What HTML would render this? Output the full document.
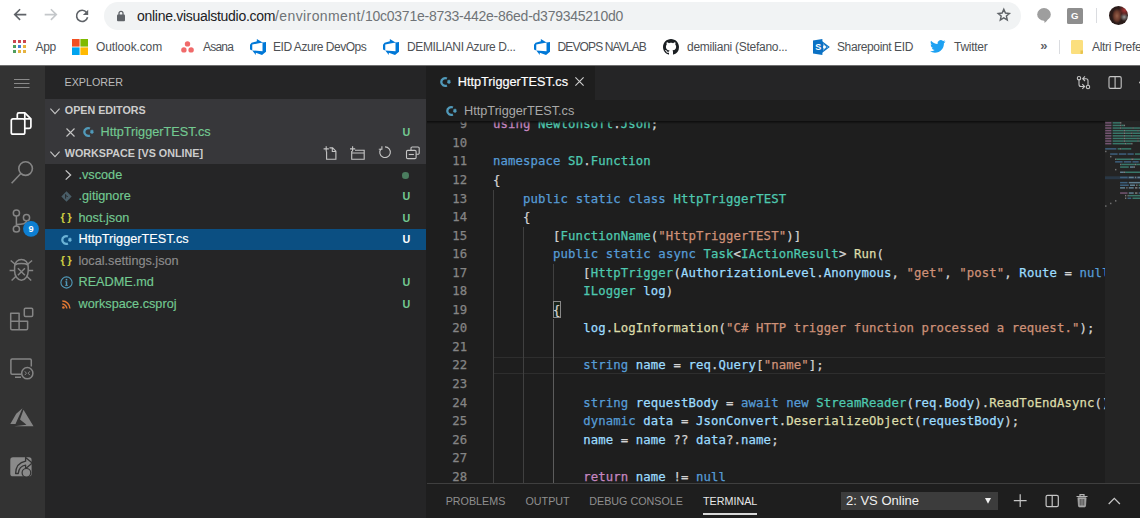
<!DOCTYPE html>
<html lang="en">
<head>
<meta charset="utf-8">
<title>HttpTriggerTEST.cs - Visual Studio Online</title>
<style>
*{box-sizing:border-box;margin:0;padding:0}
html,body{width:1140px;height:518px;overflow:hidden;background:#fff}
body{position:relative;font-family:"Liberation Sans",sans-serif;-webkit-font-smoothing:antialiased}
.abs{position:absolute}
svg{position:absolute;overflow:visible}
/* ---------- browser chrome ---------- */
#chrome{position:absolute;left:0;top:0;width:1140px;height:65px;background:#fff}
#omni{position:absolute;left:104px;top:2px;width:917px;height:28px;border-radius:14px;background:#f1f3f4}
#url{position:absolute;left:137px;top:7px;font-size:14px;line-height:18px;color:#202124;white-space:nowrap;letter-spacing:-0.29px}
#url span{color:#6f7377;letter-spacing:-0.076px}
.bm{position:absolute;top:39.3px;font-size:12px;line-height:16px;color:#4e5155;white-space:nowrap}
/* ---------- vscode ---------- */
#vs{position:absolute;left:0;top:65px;width:1140px;height:453px;background:#1e1e1e;overflow:hidden}
#topline{position:absolute;left:0;top:0;width:1140px;height:1px;background:#6f6f6f;z-index:5}
#act{position:absolute;left:0;top:0;width:45px;height:453px;background:#333333}
#side{position:absolute;left:45px;top:0;width:381.300px;height:453px;background:#252526;overflow:hidden}
.hd{position:absolute;left:19.800px;font-size:10.740px;line-height:21.480px;color:#cccccc;font-weight:bold;white-space:nowrap}
.ft{position:absolute;-webkit-text-stroke:.15px;font-size:12.700px;line-height:21.480px;color:#73c991;white-space:nowrap}
.fu{position:absolute;left:357.500px;font-size:10.740px;line-height:21.480px;color:#73c991;font-weight:bold}
#tabs{position:absolute;left:426.500px;top:0;width:713.500px;height:34.500px;background:#252526}
#tab{position:absolute;left:0;top:0;width:168.500px;height:34.500px;background:#1e1e1e}
#crumb{position:absolute;left:426.500px;top:34.500px;width:713.500px;height:21.500px;background:#1e1e1e}
#code{position:absolute;left:426.500px;top:56px;width:678px;height:362px;overflow:hidden;font-family:"DejaVu Sans Mono","Liberation Mono",monospace;font-size:12.300px;letter-spacing:.116px;color:#d4d4d4;-webkit-text-stroke:.25px}
.ln{position:absolute;left:0;width:900px;height:18.550px;line-height:18.550px;white-space:pre}
.ln i{position:absolute;left:0;width:40.800px;text-align:right;font-style:normal;color:#858585}
.ln s{position:absolute;left:66.400px;text-decoration:none}
.k{color:#569cd6}.ty{color:#4ec9b0}.st{color:#ce9178}.v{color:#9cdcfe}.f{color:#dcdcaa}.c{color:#c586c0}
#mmbg{position:absolute;left:1104.500px;top:56px;width:35.500px;height:362px;background:#242424}
#mmwrap{position:absolute;left:426.500px;top:56px;width:713.500px;height:362px;overflow:hidden}
#panel{position:absolute;left:426.500px;top:417.700px;width:713.500px;height:36px;background:#1e1e1e;border-top:1.200px solid #3f3f3f}
.pt{position:absolute;top:9.300px;font-size:10.740px;line-height:16px;color:#8f8f8f;white-space:nowrap}
</style>
</head>
<body>
<div id="chrome">
  <!-- nav icons -->
  <svg style="left:12px;top:7.400px" width="16" height="16" viewBox="0 0 16 16"><path d="M14.3 7.6H3.4M8.1 2.3 2.7 7.6l5.4 5.3" fill="none" stroke="#5f6368" stroke-width="1.6" stroke-linejoin="miter"/></svg>
  <svg style="left:43px;top:7.400px" width="16" height="16" viewBox="0 0 16 16"><path d="M1.7 7.6h10.9M7.9 2.3l5.4 5.3-5.4 5.3" fill="none" stroke="#c4c7ca" stroke-width="1.6"/></svg>
  <svg style="left:74.300px;top:7.500px" width="16" height="16" viewBox="0 0 16 16"><path d="M12.6 4.4A5.6 5.6 0 1 0 13.6 9.3" fill="none" stroke="#5f6368" stroke-width="1.6"/><path d="M14.2 1.8v5.3H8.9z" fill="#5f6368"/></svg>
  <div id="omni"></div>
  <svg style="left:116px;top:10px" width="10" height="12" viewBox="0 0 10 12"><rect x="1" y="4.6" width="8" height="6.6" rx="1" fill="#5f6368"/><path d="M3 5V3.3a2 2 0 0 1 4 0V5" fill="none" stroke="#5f6368" stroke-width="1.3"/></svg>
  <div id="url">online.visualstudio.com<span style="letter-spacing:0.39px">/environment/</span><span style="letter-spacing:-0.25px">10c0371e-8733-442e-86ed-d379345210d0</span></div>
  <svg style="left:997.3px;top:8.3px" width="13.6" height="13.6" viewBox="0 0 16 16"><path d="M8 1.6l1.95 4.3 4.65.5-3.5 3.1 1 4.6L8 11.7l-4.1 2.4 1-4.6-3.5-3.1 4.65-.5z" fill="none" stroke="#5f6368" stroke-width="1.7" stroke-linejoin="miter"/></svg>
  <svg style="left:1036.5px;top:7.8px" width="14" height="15" viewBox="0 0 14 15"><ellipse cx="7" cy="6.4" rx="6.8" ry="6.3" fill="#9e9e9e"/><path d="M6.5 12.3c1 .3 1.300 1.300.6 2.500 2-.5 3.200-2 3.600-4z" fill="#9e9e9e"/></svg>
  <div class="abs" style="left:1067px;top:8px;width:15.5px;height:15.5px;background:#8e8e8e;border-radius:1.5px;color:#fff;font-size:9.600px;line-height:15.800px;text-align:center;font-weight:bold">G</div>
  <div class="abs" style="left:1096px;top:8px;width:1px;height:15px;background:#dadce0"></div>
  <div class="abs" id="avatar" style="left:1109px;top:5.800px;width:19.4px;height:19.4px;border-radius:50%;overflow:hidden;background:radial-gradient(circle at 82% 22%,#a83434 0,rgba(168,52,52,0) 28%),radial-gradient(circle at 80% 58%,#9a9a9a 0,rgba(120,120,120,0) 22%),radial-gradient(ellipse 26% 40% at 42% 52%,#96604a 0,#6a3a2c 60%,rgba(60,30,24,0) 100%),#2a1b19"></div>
  <!-- bookmarks -->
  <svg style="left:13px;top:40px" width="13" height="13" viewBox="0 0 13 13"><g><rect x="0" y="0" width="3" height="3" fill="#cc4650"/><rect x="5" y="0" width="3" height="3" fill="#cc4650"/><rect x="10" y="0" width="3" height="3" fill="#cc4650"/><rect x="0" y="5" width="3" height="3" fill="#4f9e5e"/><rect x="5" y="5" width="3" height="3" fill="#3f80d8"/><rect x="10" y="5" width="3" height="3" fill="#e6b340"/><rect x="0" y="10" width="3" height="3" fill="#4f9e5e"/><rect x="5" y="10" width="3" height="3" fill="#e6b340"/><rect x="10" y="10" width="3" height="3" fill="#e6b340"/></g></svg>
  <div class="bm" id="b1" style="letter-spacing:-0.29px;left:35.5px">App</div>
  <svg style="left:71.600px;top:39px" width="16" height="16" viewBox="0 0 16 16"><rect x="0" y="0" width="7.6" height="7.6" fill="#f25022"/><rect x="8.4" y="0" width="7.6" height="7.6" fill="#7fba00"/><rect x="0" y="8.4" width="7.6" height="7.6" fill="#00a4ef"/><rect x="8.400" y="8.4" width="7.6" height="7.6" fill="#ffb900"/></svg>
  <div class="bm" id="b2" style="letter-spacing:-0.12px;left:96px">Outlook.com</div>
  <svg style="left:180.500px;top:40.500px" width="13" height="12" viewBox="0 0 13 12"><circle cx="6.500" cy="2.900" r="2.700" fill="#f06a6a"/><circle cx="2.900" cy="8.900" r="2.700" fill="#f06a6a"/><circle cx="10.100" cy="8.900" r="2.700" fill="#f06a6a"/></svg>
  <div class="bm" id="b3" style="letter-spacing:-0.8px;left:203px">Asana</div>
  <svg class="ado" style="left:249.500px;top:39px" width="16" height="16" viewBox="0 0 16 16"><path d="M16 3v9.700l-4 3.300-6.200-2.260v2.240L2.290 11.400l10.230.8V3.440zM12.590 3.490 6.850 0v2.290L1.580 3.840 0 5.870v4.610l2.260 1V5.570z" fill="#0078d7"/></svg>
  <div class="bm" id="b4" style="letter-spacing:-0.46px;left:273px">EID Azure DevOps</div>
  <svg class="ado" style="left:383px;top:39px" width="16" height="16" viewBox="0 0 16 16"><path d="M16 3v9.700l-4 3.300-6.200-2.260v2.240L2.290 11.400l10.230.8V3.440zM12.590 3.490 6.850 0v2.290L1.580 3.840 0 5.870v4.610l2.260 1V5.570z" fill="#0078d7"/></svg>
  <div class="bm" id="b5" style="letter-spacing:-0.38px;left:407px">DEMILIANI Azure D...</div>
  <svg class="ado" style="left:534px;top:39px" width="16" height="16" viewBox="0 0 16 16"><path d="M16 3v9.700l-4 3.300-6.200-2.260v2.240L2.290 11.400l10.230.8V3.440zM12.590 3.490 6.850 0v2.290L1.580 3.840 0 5.870v4.610l2.260 1V5.570z" fill="#0078d7"/></svg>
  <div class="bm" id="b6" style="letter-spacing:-0.87px;left:557.5px">DEVOPS NAVLAB</div>
  <svg style="left:663px;top:39px" width="16" height="16" viewBox="0 0 16 16"><path fill="#1b1f23" d="M8 0C3.580 0 0 3.580 0 8c0 3.540 2.290 6.530 5.470 7.590.4.070.55-.17.55-.38 0-.19-.01-.82-.01-1.490-2.010.37-2.530-.49-2.690-.94-.09-.23-.48-.94-.82-1.130-.28-.15-.68-.52-.01-.53.63-.01 1.080.58 1.230.82.720 1.210 1.870.87 2.330.66.070-.52.280-.87.510-1.070-1.780-.2-3.640-.89-3.640-3.950 0-.87.310-1.590.82-2.150-.08-.2-.36-1.020.08-2.120 0 0 .67-.21 2.200.82.640-.18 1.320-.27 2-.27s1.360.09 2 .27c1.530-1.040 2.200-.82 2.200-.82.440 1.100.16 1.920.08 2.120.51.560.82 1.270.82 2.150 0 3.070-1.870 3.750-3.650 3.950.29.250.54.730.54 1.480 0 1.070-.01 1.930-.01 2.200 0 .21.150.46.550.38A8.013 8.013 0 0 0 16 8c0-4.420-3.580-8-8-8z"/></svg>
  <div class="bm" id="b7" style="letter-spacing:-0.27px;left:687px">demiliani (Stefano...</div>
  <svg style="left:813px;top:39px" width="16" height="16" viewBox="0 0 16 16"><path d="M9.500 3.300 15.800 8l-6.300 4.700z" fill="none" stroke="#0a71c4" stroke-width="1.200"/><circle cx="11.200" cy="8" r="2.300" fill="none" stroke="#0a71c4" stroke-width="1"/><path d="M0 1.600 9.400 0v16L0 14.400z" fill="#0a71c4"/><text x="2.300" y="11.300" font-family="Liberation Sans,sans-serif" font-weight="bold" font-size="9" fill="#fff">S</text></svg>
  <div class="bm" id="b8" style="letter-spacing:-0.39px;left:837px">Sharepoint EID</div>
  <svg style="left:929.700px;top:40px" width="15.500" height="13" viewBox="0 0 24 20"><path fill="#1da1f2" d="M23.950 2.370a10 10 0 0 1-2.820.77 4.960 4.960 0 0 0 2.160-2.720c-.95.550-2 .96-3.130 1.190a4.920 4.920 0 0 0-8.390 4.480C7.690 5.900 4.070 3.940 1.640.970a4.820 4.820 0 0 0-.67 2.470c0 1.710.87 3.210 2.190 4.100a4.900 4.900 0 0 1-2.230-.62v.06a4.920 4.920 0 0 0 3.950 4.830 4.960 4.960 0 0 1-2.210.08 4.940 4.940 0 0 0 4.600 3.420A9.870 9.870 0 0 1 0 17.340a14 14 0 0 0 7.560 2.210c9.050 0 14-7.500 14-13.980 0-.21 0-.42-.02-.63a9.940 9.940 0 0 0 2.460-2.550z"/></svg>
  <div class="bm" id="b9" style="letter-spacing:-0.26px;left:954px">Twitter</div>
  <div class="bm" id="b10" style="left:1040.3px;top:38.2px;font-size:13px;font-weight:bold;color:#5f6368">»</div>
  <div class="abs" style="left:1059px;top:40px;width:1px;height:14px;background:#dadce0"></div>
  <svg style="left:1071px;top:40px" width="12" height="14" viewBox="0 0 12 14"><path d="M0 1.200A1.200 1.200 0 0 1 1.200 0h9.600A1.200 1.200 0 0 1 12 1.200v11.600A1.200 1.200 0 0 1 10.800 14H1.200A1.200 1.200 0 0 1 0 12.800z" fill="#fbdf7e"/><path d="M9.500 10.500h2.500v2.300a1.200 1.200 0 0 1-1.200 1.200H9.500z" fill="#e8c44f"/></svg>
  <div class="bm" id="b11" style="letter-spacing:-0.3px;left:1092px">Altri Preferiti</div>
</div>
<div id="vs">
  <div id="topline"></div>
  <div id="act"></div>
  <svg id="acticons" style="left:0;top:0" width="45" height="453" viewBox="0 65 45 453" fill="none" stroke-linecap="butt">
  <g stroke="#8a8a8a" stroke-width="1"><path d="M14 79.500h15.500M14 83.500h15.500M14 87.500h15.500"/></g>
  <!-- explorer (active) -->
  <g stroke="#ffffff" stroke-width="1.700" stroke-linejoin="round">
    <path d="M17.300 118.600v-4.200a1.600 1.600 0 0 1 1.600-1.600h6l6 6v8a1.600 1.600 0 0 1-1.600 1.600h-4.400"/>
    <path d="M24.800 113v5.800h6"/>
    <rect x="11.300" y="118.800" width="13.500" height="15.400" rx="1.800"/>
  </g>
  <!-- search -->
  <g stroke="#858585" stroke-width="1.600"><circle cx="25.600" cy="168.600" r="6.800"/><path d="M20.600 173.800l-9 9.400"/></g>
  <!-- scm -->
  <g stroke="#858585" stroke-width="1.500"><circle cx="16.400" cy="213" r="3.100"/><circle cx="26.500" cy="217.700" r="3.100"/><circle cx="16.400" cy="229" r="3.100"/><path d="M16.400 216.100v9.800M26.500 220.800c0 3.400-4.500 3.600-10.100 3.600"/></g>
  <circle cx="31" cy="228.800" r="7.900" fill="#0e7fd2"/>
  <text x="31" y="232.200" text-anchor="middle" font-family="Liberation Sans,sans-serif" font-weight="bold" font-size="9.200" fill="#ffffff" stroke="none">9</text>
  <!-- debug -->
  <g stroke="#858585" stroke-width="1.500"><path d="M14.600 267c0-4.400 3-7.600 6.800-7.600s6.800 3.200 6.800 7.600v4c0 5-3.100 9.300-6.800 9.300s-6.800-4.300-6.800-9.300z"/><path d="M15.200 264.800c2-1.600 10.400-1.600 12.400 0"/><path d="M15.200 264.300l-4.500-3.800M27.600 264.300l4.500-3.800M14.600 270.500h-5M28.200 270.500h5M16 276.200l-4.400 4.300M26.800 276.200l4.400 4.300M17.900 268.200l7 7M24.900 268.200l-7 7"/></g>
  <!-- extensions -->
  <g stroke="#858585" stroke-width="1.500" stroke-linejoin="round"><path d="M10.700 313.200h8.400v16.500h-7.200a1.200 1.200 0 0 1-1.200-1.200zM19.100 321.300h8.500v7.200a1.200 1.200 0 0 1-1.200 1.200h-7.300M10.700 321.300h8.400"/><rect x="24.300" y="308.200" width="8.400" height="8.300" rx="1.200"/></g>
  <!-- remote explorer -->
  <g stroke="#858585" stroke-width="1.500"><path d="M21.500 374.200h-9.400a1.200 1.200 0 0 1-1.200-1.200v-12.800a1.200 1.200 0 0 1 1.200-1.200h18a1.200 1.200 0 0 1 1.200 1.200v6.300M15 377.300h6"/><circle cx="27.300" cy="373.200" r="5.600"/><path d="M24.800 371.300l1.600 1.900-1.600 1.900M29.800 371.300l-1.600 1.900 1.600 1.900" stroke-width="1"/></g>
  <!-- azure -->
  <g fill="#858585" stroke="none"><path d="M22.500 408.300l-6.300 5.400-5.900 10.300h5.200zM23.500 409.800l-3.500 9.600 6.500 5.300-12.200 1.500h19.200z"/></g>
  <!-- live share -->
  <g><rect x="10.300" y="457.300" width="21.300" height="19" rx="2.600" fill="#8a8a8a"/><path d="M15.600 473.500c.2-6.500 3.400-11 10-12.300v-3.700l6.600 5.600-6.600 5.600v-3.500c-4 .5-6.800 3.300-7.300 8.300z" fill="#8a8a8a" stroke="#333333" stroke-width="1.300" stroke-linejoin="round"/><circle cx="26.400" cy="472.800" r="4.300" fill="#8a8a8a" stroke="#333333" stroke-width="1.200"/></g>
</svg>
  <div id="side">
  <div class="abs" id="extitle" style="left:19.500px;top:9.300px;font-size:10.740px;line-height:16px;color:#bbbbbb;white-space:nowrap">EXPLORER</div>
  <div class="abs" style="left:0;top:34.20px;width:381.500px;height:64.98px;background:#37373a"></div>
  <svg style="left:4.7px;top:43.00px" width="10" height="7" viewBox="0 0 10 7"><path d="M.4.700l4.600 4.900L9.600.700" fill="none" stroke="#c5c5c5" stroke-width="1.100"/></svg>
  <div class="hd" id="h1" style="top:35.40px">OPEN EDITORS</div>
  <svg style="left:4.7px;top:85.92px" width="10" height="7" viewBox="0 0 10 7"><path d="M.4.700l4.600 4.900L9.600.700" fill="none" stroke="#c5c5c5" stroke-width="1.100"/></svg>
  <div class="hd" id="h2" style="top:78.32px">WORKSPACE [VS ONLINE]</div>
  <svg style="left:21.200px;top:63.36px" width="9" height="9" viewBox="0 0 9 9"><path d="M.500.500l8 8M8.500.500l-8 8" stroke="#c5c5c5" stroke-width="1.100"/></svg>
  <svg style="left:37.6px;top:62.46px" width="11" height="10" viewBox="0 0 11 10"><path d="M6.900 1.500A3.900 3.900 0 1 0 6.900 8.500" fill="none" stroke="#519aba" stroke-width="2.300"/><path d="M7.600 3.400h2.600v2.800H7.600z" fill="#519aba"/><path d="M8.400 2.700v4.200M9.500 2.700v4.200M7 4.100h3.800M7 5.500h3.800" stroke="#519aba" stroke-width=".6"/></svg>
  <div class="ft" id="f0" style="left:55.500px;top:56.86px">HttpTriggerTEST.cs</div>
  <div class="fu" style="top:56.86px">U</div>
  <svg style="left:278px;top:80.72px" width="142" height="15" viewBox="0 0 142 15" fill="none" stroke="#c5c5c5" stroke-width="1.100">
 <path d="M3.600 5.500v7.800h9.300V5.200L9.600 1.900H6.500M9.300 2.100v3.400h3.500M.600 2.900h5.200M3.200.300v5.200"/>
 <path d="M28.700 5v8.200h12.500V4.200h-9.200M28.700 7h12.500M27 2.900h5.200M29.600.300v5.200"/>
 <path d="M58 2.800A5.300 5.300 0 1 0 62 .900"/><path d="M55.800 3.300h3.100v-3.100" stroke-width="1.100"/>
 <path d="M88 4.300v-2.100a1.200 1.200 0 0 1 1.200-1.200h5.800a1.200 1.200 0 0 1 1.200 1.200v4.800a1.200 1.200 0 0 1-1.200 1.200h-1.800"/><rect x="83.500" y="4.400" width="9.600" height="8.200" rx="1.200"/><path d="M85.700 8.500h5.200"/>
</svg>
  <svg style="left:19.8px;top:105.31px" width="7" height="10" viewBox="0 0 7 10"><path d="M.700.400l4.900 4.600L.700 9.600" fill="none" stroke="#c5c5c5" stroke-width="1.300"/></svg>
  <div class="abs" style="left:357.400px;top:107.01px;width:6.600px;height:6.600px;border-radius:50%;background:#4b7d5f"></div>
  <div class="ft" id="f1" style="left:33.500px;top:99.78px;color:#73c991">.vscode</div>
  <svg style="left:16px;top:126.47px" width="11" height="11" viewBox="0 0 11 11"><path d="M5.500.300l5.200 5.200-5.200 5.200L.300 5.500z" fill="#4a5e68"/><path d="M4.600 3.200v4.400M4.600 4.600l2.200 1" stroke="#252526" stroke-width=".9"/></svg>
  <div class="ft" id="f2" style="left:33.500px;top:121.24px;color:#73c991">.gitignore</div>
  <div class="fu" style="top:121.24px">U</div>
  <div class="abs" style="left:15.600px;top:142.10px;font-size:11.500px;font-weight:bold;line-height:21.46px;color:#cbcb41;letter-spacing:2.200px">{}</div>
  <div class="ft" id="f3" style="left:33.500px;top:142.70px;color:#73c991">host.json</div>
  <div class="fu" style="top:142.70px">U</div>
  <div class="abs" style="left:0;top:163.96px;width:381.500px;height:20.86px;background:#0b4f82"></div>
  <svg style="left:16.3px;top:169.69px" width="11" height="10" viewBox="0 0 11 10"><path d="M6.900 1.500A3.900 3.900 0 1 0 6.900 8.500" fill="none" stroke="#6bb3d6" stroke-width="2.300"/><path d="M7.600 3.400h2.600v2.800H7.600z" fill="#6bb3d6"/><path d="M8.400 2.700v4.200M9.500 2.700v4.200M7 4.100h3.800M7 5.500h3.800" stroke="#6bb3d6" stroke-width=".6"/></svg>
  <div class="ft" id="f4" style="left:33.500px;top:164.16px;color:#ffffff">HttpTriggerTEST.cs</div>
  <div class="fu" style="top:164.16px;color:#ffffff">U</div>
  <div class="abs" style="left:15.600px;top:185.02px;font-size:11.500px;font-weight:bold;line-height:21.46px;color:#cbcb41;letter-spacing:2.200px">{}</div>
  <div class="ft" id="f5" style="left:33.500px;top:185.62px;color:#8c8c8c">local.settings.json</div>
  <svg style="left:14.500px;top:210.61px" width="13" height="13" viewBox="0 0 13 13"><circle cx="6.500" cy="6.500" r="5.600" fill="none" stroke="#519aba" stroke-width="1.100"/><path d="M6.500 5.400v4.200" stroke="#519aba" stroke-width="1.500"/><circle cx="6.500" cy="3.700" r=".9" fill="#519aba"/><path d="M5.300 5.700h1.500M5.200 9.500h2.700" stroke="#519aba" stroke-width=".8"/></svg>
  <div class="ft" id="f6" style="left:33.500px;top:207.08px;color:#73c991">README.md</div>
  <div class="fu" style="top:207.08px">U</div>
  <svg style="left:16.800px;top:234.87px" width="9" height="9" viewBox="0 0 9 9"><circle cx="1.400" cy="7.500" r="1.300" fill="#e37933"/><path d="M.300 4.100a4.500 4.500 0 0 1 4.500 4.500M.300 1a7.600 7.600 0 0 1 7.600 7.600" fill="none" stroke="#e37933" stroke-width="1.500"/></svg>
  <div class="ft" id="f7" style="left:33.500px;top:228.54px;color:#73c991">workspace.csproj</div>
  <div class="fu" style="top:228.54px">U</div>
  </div>
  <div id="tabs"><div id="tab"><svg style="left:13.5px;top:12.3px" width="11" height="10" viewBox="0 0 11 10"><path d="M6.900 1.500A3.900 3.900 0 1 0 6.900 8.500" fill="none" stroke="#519aba" stroke-width="2.300"/><path d="M7.600 3.400h2.600v2.800H7.600z" fill="#519aba"/><path d="M8.400 2.700v4.200M9.500 2.700v4.200M7 4.100h3.800M7 5.500h3.800" stroke="#519aba" stroke-width=".6"/></svg>
    <div class="abs" id="tabt" style="left:31.300px;top:1.300px;-webkit-text-stroke:.2px;font-size:12.700px;line-height:33.800px;color:#ffffff;white-space:nowrap">HttpTriggerTEST.cs</div>
    <svg style="left:148.800px;top:12px" width="9" height="9" viewBox="0 0 9 9"><path d="M.400.400l8.200 8.200M8.600.400L.400 8.600" stroke="#d0d0d0" stroke-width="1.100"/></svg></div><svg style="left:649.200px;top:10px" width="64.8" height="15" viewBox="1076 75 64.8 15" fill="none" stroke="#c5c5c5" stroke-width="1.100">
    <circle cx="1079" cy="78.200" r="1.700"/><circle cx="1088" cy="87" r="1.700"/>
    <path d="M1079 80v4.500a2 2 0 0 0 2 2h2.800M1082.300 84.200l2.300 2.300-2.300 2.300M1088 85.200v-4.500a2 2 0 0 0-2-2h-2.600M1085 76.400l-2.300 2.300 2.300 2.300"/>
    <rect x="1109" y="76.600" width="12.200" height="11.800" rx="1.400"/><path d="M1115.100 76.600v11.800"/>
    <circle cx="1140" cy="82.500" r="1" fill="#c5c5c5" stroke="none"/>
  </svg></div>
  <div id="crumb"><svg style="left:19.3px;top:6px" width="11" height="10" viewBox="0 0 11 10"><path d="M6.900 1.500A3.900 3.900 0 1 0 6.900 8.500" fill="none" stroke="#519aba" stroke-width="2.300"/><path d="M7.600 3.400h2.600v2.800H7.600z" fill="#519aba"/><path d="M8.400 2.700v4.200M9.500 2.700v4.200M7 4.100h3.800M7 5.500h3.800" stroke="#519aba" stroke-width=".6"/></svg>
    <div class="abs" id="crt" style="left:37.600px;top:1px;font-size:12.700px;line-height:21px;color:#a9a9a9;white-space:nowrap">HttpTriggerTEST.cs</div></div>
  <div id="code">
    <div class="abs" style="left:67px;top:235.75px;width:613px;height:16.95px;border-top:1.300px solid #2e2e2e;border-bottom:1.300px solid #2e2e2e"></div>
    <div class="abs" style="left:66.40px;top:68.50px;width:1px;height:315.35px;background:#404040"></div>
    <div class="abs" style="left:96.48px;top:105.60px;width:1px;height:278.25px;background:#404040"></div>
    <div class="abs" style="left:126.57px;top:142.70px;width:1px;height:37.10px;background:#404040"></div>
    <div class="abs" style="left:126.57px;top:198.35px;width:1px;height:185.50px;background:#5c5c5c"></div>
    <div class="abs" style="left:126.07px;top:180.20px;width:8.52px;height:16.95px;border:1px solid #888888;background:rgba(0,100,0,.1)"></div>
    <div class="ln" style="top:-5.70px"><i>9</i><s><span class="c">using</span> <span class="ty">Newtonsoft</span>.<span class="ty">Json</span>;</s></div>
    <div class="ln" style="top:12.85px"><i>10</i><s></s></div>
    <div class="ln" style="top:31.40px"><i>11</i><s><span class="k">namespace</span> <span class="ty">SD</span>.<span class="ty">Function</span></s></div>
    <div class="ln" style="top:49.95px"><i>12</i><s>{</s></div>
    <div class="ln" style="top:68.50px"><i>13</i><s>    <span class="k">public</span> <span class="k">static</span> <span class="k">class</span> <span class="ty">HttpTriggerTEST</span></s></div>
    <div class="ln" style="top:87.05px"><i>14</i><s>    {</s></div>
    <div class="ln" style="top:105.60px"><i>15</i><s>        [<span class="ty">FunctionName</span>(<span class="st">"HttpTriggerTEST"</span>)]</s></div>
    <div class="ln" style="top:124.15px"><i>16</i><s>        <span class="k">public</span> <span class="k">static</span> <span class="k">async</span> <span class="ty">Task</span>&lt;<span class="ty">IActionResult</span>&gt; <span class="f">Run</span>(</s></div>
    <div class="ln" style="top:142.70px"><i>17</i><s>            [<span class="ty">HttpTrigger</span>(<span class="v">AuthorizationLevel</span>.<span class="v">Anonymous</span>, <span class="st">"get"</span>, <span class="st">"post"</span>, <span class="v">Route</span> = <span class="k">null</span>)] <span class="ty">HttpRequest</span> <span class="v">req</span>,</s></div>
    <div class="ln" style="top:161.25px"><i>18</i><s>            <span class="ty">ILogger</span> <span class="v">log</span>)</s></div>
    <div class="ln" style="top:179.80px"><i>19</i><s>        {</s></div>
    <div class="ln" style="top:198.35px"><i>20</i><s>            <span class="v">log</span>.<span class="f">LogInformation</span>(<span class="st">"C# HTTP trigger function processed a request."</span>);</s></div>
    <div class="ln" style="top:216.90px"><i>21</i><s></s></div>
    <div class="ln" style="top:235.45px"><i>22</i><s>            <span class="k">string</span> <span class="v">name</span> = <span class="v">req</span>.<span class="v">Query</span>[<span class="st">"name"</span>];</s></div>
    <div class="ln" style="top:254.00px"><i>23</i><s></s></div>
    <div class="ln" style="top:272.55px"><i>24</i><s>            <span class="k">string</span> <span class="v">requestBody</span> = <span class="k">await</span> <span class="k">new</span> <span class="ty">StreamReader</span>(<span class="v">req</span>.<span class="v">Body</span>).<span class="f">ReadToEndAsync</span>();</s></div>
    <div class="ln" style="top:291.10px"><i>25</i><s>            <span class="k">dynamic</span> <span class="v">data</span> = <span class="v">JsonConvert</span>.<span class="f">DeserializeObject</span>(<span class="v">requestBody</span>);</s></div>
    <div class="ln" style="top:309.65px"><i>26</i><s>            <span class="v">name</span> = <span class="v">name</span> ?? <span class="v">data</span>?.<span class="v">name</span>;</s></div>
    <div class="ln" style="top:328.20px"><i>27</i><s></s></div>
    <div class="ln" style="top:346.75px"><i>28</i><s>            <span class="c">return</span> <span class="v">name</span> != <span class="k">null</span></s></div>
    <div class="ln" style="top:365.30px"><i>29</i><s>                ? (<span class="ty">ActionResult</span>)<span class="k">new</span> <span class="ty">OkObjectResult</span>(<span class="st">$"Hello, {name}"</span>)</s></div>
    <div class="abs" style="left:0;top:0;width:713.500px;height:3px;background:linear-gradient(#0c0c0c,rgba(12,12,12,0))"></div>
  </div>
  <div id="mmbg"></div>
  <div id="mmwrap"><svg id="mini" style="left:678.500px;top:0" width="35" height="362" viewBox="1105 0 35 362" opacity=".5"><g><rect x="1105.20" y="1.10" width="6.20" height="1.500" fill="#c586c0"/><rect x="1112.64" y="1.10" width="7.44" height="1.500" fill="#4ec9b0"/><rect x="1120.08" y="1.10" width="1.24" height="1.500" fill="#d4d4d4"/><rect x="1105.20" y="3.70" width="6.20" height="1.500" fill="#c586c0"/><rect x="1112.64" y="3.70" width="7.44" height="1.500" fill="#4ec9b0"/><rect x="1120.08" y="3.70" width="1.24" height="1.500" fill="#d4d4d4"/><rect x="1121.32" y="3.70" width="2.48" height="1.500" fill="#4ec9b0"/><rect x="1123.80" y="3.70" width="1.24" height="1.500" fill="#d4d4d4"/><rect x="1105.20" y="6.30" width="6.20" height="1.500" fill="#c586c0"/><rect x="1112.64" y="6.30" width="7.44" height="1.500" fill="#4ec9b0"/><rect x="1120.08" y="6.30" width="1.24" height="1.500" fill="#d4d4d4"/><rect x="1121.32" y="6.30" width="11.16" height="1.500" fill="#4ec9b0"/><rect x="1132.48" y="6.30" width="1.24" height="1.500" fill="#d4d4d4"/><rect x="1133.72" y="6.30" width="6.20" height="1.500" fill="#4ec9b0"/><rect x="1139.92" y="6.30" width="1.24" height="1.500" fill="#d4d4d4"/><rect x="1105.20" y="8.90" width="6.20" height="1.500" fill="#c586c0"/><rect x="1112.64" y="8.90" width="11.16" height="1.500" fill="#4ec9b0"/><rect x="1123.80" y="8.90" width="1.24" height="1.500" fill="#d4d4d4"/><rect x="1125.04" y="8.90" width="12.40" height="1.500" fill="#4ec9b0"/><rect x="1137.44" y="8.90" width="1.24" height="1.500" fill="#d4d4d4"/><rect x="1138.68" y="8.90" width="3.72" height="1.500" fill="#4ec9b0"/><rect x="1105.20" y="11.50" width="6.20" height="1.500" fill="#c586c0"/><rect x="1112.64" y="11.50" width="11.16" height="1.500" fill="#4ec9b0"/><rect x="1123.80" y="11.50" width="1.24" height="1.500" fill="#d4d4d4"/><rect x="1125.04" y="11.50" width="6.20" height="1.500" fill="#4ec9b0"/><rect x="1131.24" y="11.50" width="1.24" height="1.500" fill="#d4d4d4"/><rect x="1132.48" y="11.50" width="8.68" height="1.500" fill="#4ec9b0"/><rect x="1105.20" y="14.10" width="6.20" height="1.500" fill="#c586c0"/><rect x="1112.64" y="14.10" width="11.16" height="1.500" fill="#4ec9b0"/><rect x="1123.80" y="14.10" width="1.24" height="1.500" fill="#d4d4d4"/><rect x="1125.04" y="14.10" width="6.20" height="1.500" fill="#4ec9b0"/><rect x="1131.24" y="14.10" width="1.24" height="1.500" fill="#d4d4d4"/><rect x="1132.48" y="14.10" width="8.68" height="1.500" fill="#4ec9b0"/><rect x="1105.20" y="16.70" width="6.20" height="1.500" fill="#c586c0"/><rect x="1112.64" y="16.70" width="11.16" height="1.500" fill="#4ec9b0"/><rect x="1123.80" y="16.70" width="1.24" height="1.500" fill="#d4d4d4"/><rect x="1125.04" y="16.70" width="12.40" height="1.500" fill="#4ec9b0"/><rect x="1137.44" y="16.70" width="1.24" height="1.500" fill="#d4d4d4"/><rect x="1138.68" y="16.70" width="4.96" height="1.500" fill="#4ec9b0"/><rect x="1105.20" y="19.30" width="6.20" height="1.500" fill="#c586c0"/><rect x="1112.64" y="19.30" width="11.16" height="1.500" fill="#4ec9b0"/><rect x="1123.80" y="19.30" width="1.24" height="1.500" fill="#d4d4d4"/><rect x="1125.04" y="19.30" width="12.40" height="1.500" fill="#4ec9b0"/><rect x="1137.44" y="19.30" width="1.24" height="1.500" fill="#d4d4d4"/><rect x="1138.68" y="19.30" width="8.68" height="1.500" fill="#4ec9b0"/><rect x="1105.20" y="21.90" width="6.20" height="1.500" fill="#c586c0"/><rect x="1112.64" y="21.90" width="12.40" height="1.500" fill="#4ec9b0"/><rect x="1125.04" y="21.90" width="1.24" height="1.500" fill="#d4d4d4"/><rect x="1126.28" y="21.90" width="4.96" height="1.500" fill="#4ec9b0"/><rect x="1131.24" y="21.90" width="1.24" height="1.500" fill="#d4d4d4"/><rect x="1105.20" y="27.10" width="11.16" height="1.500" fill="#569cd6"/><rect x="1117.60" y="27.10" width="2.48" height="1.500" fill="#4ec9b0"/><rect x="1120.08" y="27.10" width="1.24" height="1.500" fill="#d4d4d4"/><rect x="1121.32" y="27.10" width="9.92" height="1.500" fill="#4ec9b0"/><rect x="1105.20" y="29.70" width="1.24" height="1.500" fill="#d4d4d4"/><rect x="1110.16" y="32.30" width="7.44" height="1.500" fill="#569cd6"/><rect x="1118.84" y="32.30" width="7.44" height="1.500" fill="#569cd6"/><rect x="1127.52" y="32.30" width="6.20" height="1.500" fill="#569cd6"/><rect x="1134.96" y="32.30" width="18.60" height="1.500" fill="#4ec9b0"/><rect x="1110.16" y="34.90" width="1.24" height="1.500" fill="#d4d4d4"/><rect x="1115.12" y="37.50" width="1.24" height="1.500" fill="#d4d4d4"/><rect x="1116.36" y="37.50" width="14.88" height="1.500" fill="#4ec9b0"/><rect x="1131.24" y="37.50" width="2.48" height="1.500" fill="#d4d4d4"/><rect x="1133.72" y="37.50" width="18.60" height="1.500" fill="#4ec9b0"/><rect x="1115.12" y="40.10" width="7.44" height="1.500" fill="#569cd6"/><rect x="1123.80" y="40.10" width="7.44" height="1.500" fill="#569cd6"/><rect x="1132.48" y="40.10" width="6.20" height="1.500" fill="#569cd6"/><rect x="1139.92" y="40.10" width="4.96" height="1.500" fill="#4ec9b0"/><rect x="1120.08" y="42.70" width="1.24" height="1.500" fill="#d4d4d4"/><rect x="1121.32" y="42.70" width="13.64" height="1.500" fill="#4ec9b0"/><rect x="1134.96" y="42.70" width="1.24" height="1.500" fill="#d4d4d4"/><rect x="1136.20" y="42.70" width="22.32" height="1.500" fill="#4ec9b0"/><rect x="1120.08" y="45.30" width="8.68" height="1.500" fill="#4ec9b0"/><rect x="1130.00" y="45.30" width="3.72" height="1.500" fill="#9cdcfe"/><rect x="1133.72" y="45.30" width="1.24" height="1.500" fill="#d4d4d4"/><rect x="1115.12" y="47.90" width="1.24" height="1.500" fill="#d4d4d4"/><rect x="1120.08" y="50.50" width="3.72" height="1.500" fill="#9cdcfe"/><rect x="1123.80" y="50.50" width="1.24" height="1.500" fill="#d4d4d4"/><rect x="1125.04" y="50.50" width="17.36" height="1.500" fill="#4ec9b0"/><rect x="1105" y="55.30" width="35" height="2.90" fill="#2f4a66"/><rect x="1120.08" y="55.70" width="7.44" height="1.500" fill="#569cd6"/><rect x="1128.76" y="55.70" width="4.96" height="1.500" fill="#9cdcfe"/><rect x="1134.96" y="55.70" width="1.24" height="1.500" fill="#d4d4d4"/><rect x="1137.44" y="55.70" width="3.72" height="1.500" fill="#9cdcfe"/><rect x="1120.08" y="60.90" width="7.44" height="1.500" fill="#569cd6"/><rect x="1128.76" y="60.90" width="13.64" height="1.500" fill="#9cdcfe"/><rect x="1120.08" y="63.50" width="8.68" height="1.500" fill="#569cd6"/><rect x="1130.00" y="63.50" width="4.96" height="1.500" fill="#9cdcfe"/><rect x="1136.20" y="63.50" width="1.24" height="1.500" fill="#d4d4d4"/><rect x="1138.68" y="63.50" width="13.64" height="1.500" fill="#4ec9b0"/><rect x="1120.08" y="66.10" width="4.96" height="1.500" fill="#9cdcfe"/><rect x="1126.28" y="66.10" width="1.24" height="1.500" fill="#d4d4d4"/><rect x="1128.76" y="66.10" width="4.96" height="1.500" fill="#9cdcfe"/><rect x="1134.96" y="66.10" width="2.48" height="1.500" fill="#d4d4d4"/><rect x="1138.68" y="66.10" width="4.96" height="1.500" fill="#9cdcfe"/><rect x="1120.08" y="71.30" width="7.44" height="1.500" fill="#c586c0"/><rect x="1128.76" y="71.30" width="4.96" height="1.500" fill="#9cdcfe"/><rect x="1134.96" y="71.30" width="2.48" height="1.500" fill="#d4d4d4"/><rect x="1138.68" y="71.30" width="4.96" height="1.500" fill="#569cd6"/><rect x="1125.04" y="73.90" width="1.24" height="1.500" fill="#d4d4d4"/><rect x="1127.52" y="73.90" width="1.24" height="1.500" fill="#d4d4d4"/><rect x="1128.76" y="73.90" width="14.88" height="1.500" fill="#4ec9b0"/><rect x="1125.04" y="76.50" width="1.24" height="1.500" fill="#d4d4d4"/><rect x="1127.52" y="76.50" width="3.72" height="1.500" fill="#569cd6"/><rect x="1132.48" y="76.50" width="27.28" height="1.500" fill="#4ec9b0"/><rect x="1115.12" y="79.10" width="1.24" height="1.500" fill="#d4d4d4"/><rect x="1110.16" y="81.70" width="1.24" height="1.500" fill="#d4d4d4"/><rect x="1105.20" y="84.30" width="1.24" height="1.500" fill="#d4d4d4"/></g></svg></div>
  <div id="panel">
    <div class="pt" id="p1" style="left:19.200px">PROBLEMS</div>
    <div class="pt" id="p2" style="left:99px">OUTPUT</div>
    <div class="pt" id="p3" style="left:162.800px">DEBUG CONSOLE</div>
    <div class="pt" id="p4" style="left:276.500px;color:#e7e7e7">TERMINAL</div>
    <div class="abs" style="left:276.500px;top:29.800px;width:53.500px;height:1.200px;background:#d8d8d8"></div>
    <div class="abs" id="sel" style="left:414.500px;top:8.600px;width:156.500px;height:17.600px;background:#3c3c3c"></div>
    <div class="abs" id="selt" style="left:419.500px;top:8.600px;font-size:13px;line-height:17.600px;color:#f0f0f0;white-space:nowrap">2: VS Online</div>
    <svg style="left:558.300px;top:14.300px" width="6" height="6" viewBox="0 0 6 6"><path d="M0 0h6L3 5.800z" fill="#f0f0f0"/></svg>
    <svg style="left:586.200px;top:9px" width="110" height="15" viewBox="1013.500 492 110 15" fill="none" stroke="#c5c5c5" stroke-width="1.200">
      <path d="M1020.700 493.200v12.800M1014.300 499.600h12.800"/>
      <rect x="1046.600" y="494.400" width="12.200" height="11.200" rx="1.400"/><path d="M1052.700 494.400v11.200"/>
      <path d="M1078.400 496.800h8.200l-.6 8.200a1 1 0 0 1-1 .9h-5a1 1 0 0 1-1-.9z" fill="#a8a8a8" stroke="#a8a8a8" stroke-width=".8"/><path d="M1077 495.500h11M1080.500 495.300v-1.600h4v1.600" stroke="#b5b5b5"/><path d="M1080.700 498v6.500M1082.500 498v6.500M1084.300 498v6.500" stroke="#1e1e1e" stroke-width=".7"/>
      <path d="M1109.200 503l5.600-5.600 5.600 5.600" stroke-width="1.300"/>
    </svg>
  </div>
</div>
</body>
</html>
